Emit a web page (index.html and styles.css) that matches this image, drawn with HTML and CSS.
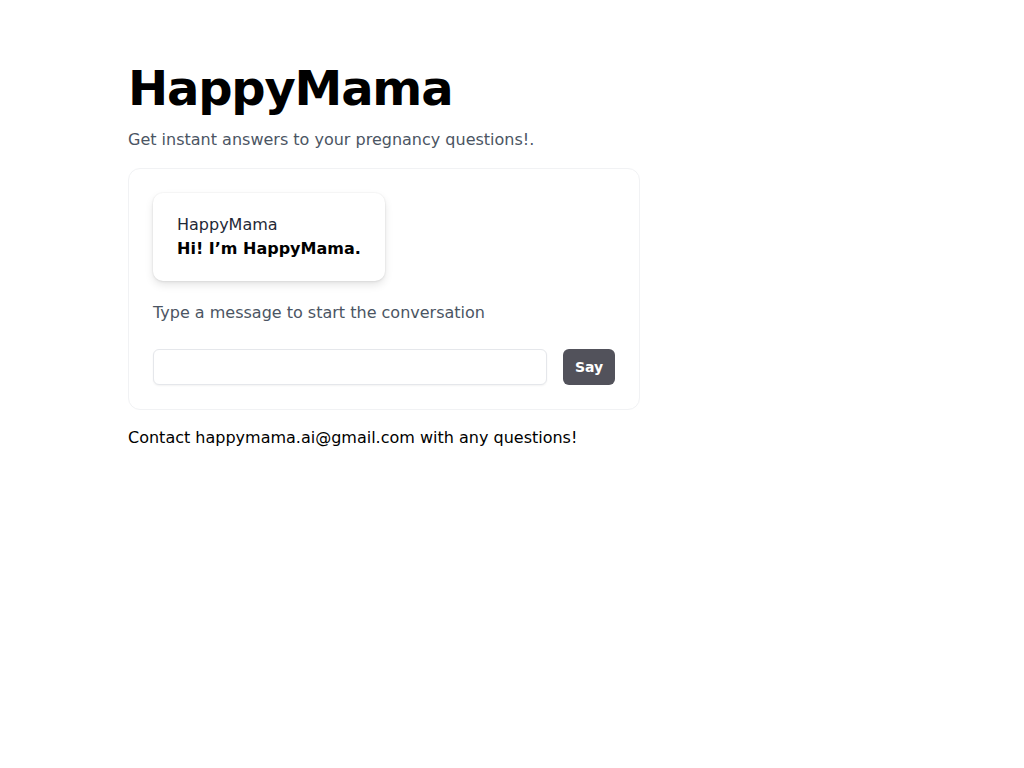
FILE: index.html
```html
<!DOCTYPE html>
<html>
<head>
<meta charset="utf-8">
<link rel="stylesheet" href="styles.css">
</head>
<body>
<main class="page">
  <h1 class="title">HappyMama</h1>
  <p class="subtitle">Get instant answers to your pregnancy questions!.</p>
  <section class="card">
    <div class="bubble">
      <div class="bubble-name">HappyMama</div>
      <div class="bubble-text">Hi! I’m HappyMama.</div>
    </div>
    <p class="hint">Type a message to start the conversation</p>
    <form class="composer">
      <input class="composer-input" type="text">
      <button class="composer-btn" type="button">Say</button>
    </form>
  </section>
  <p class="contact">Contact happymama.ai@gmail.com with any questions!</p>
</main>
</body>
</html>
```
FILE: styles.css
```css
* { box-sizing: border-box; }
html, body { margin: 0; padding: 0; background: #fff; }
body {
  font-family: "DejaVu Sans", sans-serif;
  color: #111;
  font-size: 16px;
  line-height: 24px;
}
.page {
  width: 768px;
  margin: 0 auto;
  padding-top: 64px;
}
.title {
  margin: 0;
  font-size: 48px;
  line-height: 48px;
  font-weight: bold;
  letter-spacing: -1.2px;
  color: #000;
}
.subtitle {
  margin: 16px 0 16px;
  color: #4b5563;
}
.card {
  width: 512px;
  border: 1px solid #f1f2f4;
  border-radius: 12px;
  padding: 24px;
}
.bubble {
  display: inline-block;
  padding: 20px 24px;
  border-radius: 10px;
  background: #fff;
  box-shadow: 0 4px 8px rgba(0,0,0,0.10), 0 0 0 1px rgba(0,0,0,0.02), 0 1px 3px rgba(0,0,0,0.06);
}
.bubble-name { color: #1f2937; }
.bubble-text { font-weight: bold; color: #000; }
.hint {
  margin: 20px 0 24px;
  color: #4b5563;
}
.composer {
  display: flex;
  gap: 16px;
  margin: 0;
}
.composer-input {
  flex: 1;
  height: 36px;
  border: 1px solid #e5e7eb;
  border-radius: 6px;
  box-shadow: 0 1px 2px rgba(0,0,0,0.05);
  font: inherit;
  padding: 0 10px;
}
.composer-btn {
  width: 52px;
  height: 36px;
  border: none;
  border-radius: 6px;
  background: #52525b;
  color: #fff;
  font-family: "DejaVu Sans", sans-serif;
  font-weight: bold;
  font-size: 14px;
  padding: 0;
}
.contact {
  margin: 16px 0 0;
  color: #000;
}
```
